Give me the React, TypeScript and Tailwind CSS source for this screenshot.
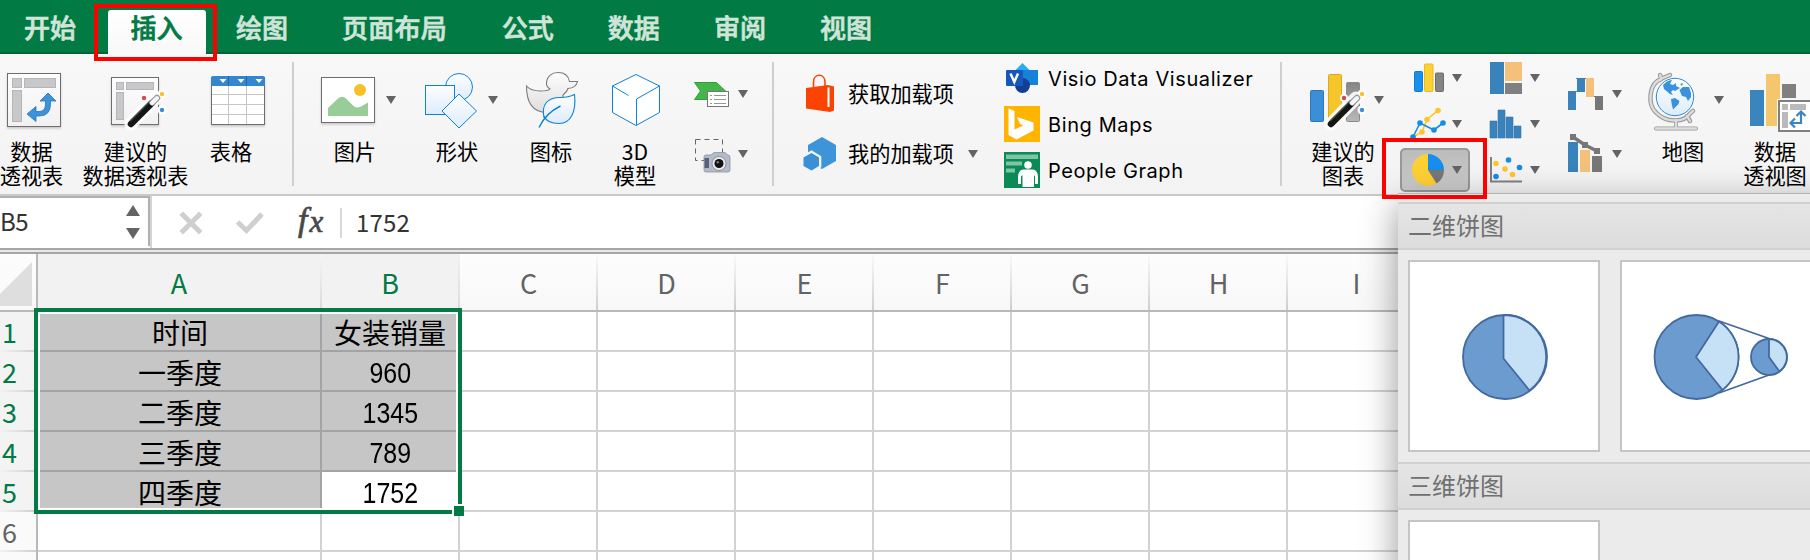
import type { ReactNode } from 'react';

const CJK = 'font-["Noto_Sans_CJK_SC",sans-serif]';

function Art({ x, y, w, h, children }: { x: number; y: number; w: number; h: number; children: ReactNode }) {
  return (
    <svg width={w} height={h} viewBox={`${x} ${y} ${w} ${h}`} className="block shrink-0 overflow-visible">
      {children}
    </svg>
  );
}

function Arrow({ x, y }: { x: number; y: number }) {
  return <path d={`M${x} ${y}h10l-5 8z`} fill="#646464" />;
}

function Wand() {
  return (
    <g>
      <path d="M131 124L156 98" stroke="#fff" strokeWidth="13" strokeLinecap="round" opacity=".9" />
      <circle cx="144" cy="98" r="4" fill="#fff" />
      <circle cx="162" cy="94" r="4.5" fill="#fff" />
      <circle cx="162" cy="110" r="4.5" fill="#fff" />
      <path d="M131 124L152 103" stroke="#151515" strokeWidth="6.5" strokeLinecap="round" />
      <path d="M130 121L150 101" stroke="#555" strokeWidth="1.2" />
      <path d="M152.5 102.5L157 98" stroke="#9a9a9a" strokeWidth="6.5" strokeLinecap="round" />
      <path d="M152 103L157 98" stroke="#f4f6f8" strokeWidth="4" strokeLinecap="round" />
      <circle cx="144" cy="98" r="2.2" fill="#e0434d" />
      <circle cx="162" cy="94" r="2.2" fill="#f7c325" />
      <circle cx="162" cy="110" r="2.2" fill="#3a8edb" />
    </g>
  );
}

function BigItem({ x, w, className, label, children }: { x: number; w: number; className: string; label: string; children: ReactNode }) {
  return (
    <div className={`flex shrink-0 flex-col items-center pt-[6px] ${className}`}>
      <Art x={x} y={60} w={w} h={80}>{children}</Art>
      <div className="-mt-[1px] text-center text-[21.200px] leading-[24px] whitespace-pre text-black">{label}</div>
    </div>
  );
}

function Divider({ className }: { className: string }) {
  return <div className={`mt-2 h-[124px] w-[2px] shrink-0 bg-[#cfcfcf] ${className}`} />;
}

function Tab({ label, className }: { label: string; className: string }) {
  return <div className={`shrink-0 text-[26px] leading-[52px] font-medium whitespace-nowrap [-webkit-text-stroke:0.7px_currentColor] ${className}`}>{label}</div>;
}

function Tabs() {
  return (
    <div className="flex h-[54px] shrink-0 border-b-2 border-[#036537] bg-[#027a43] pl-6 text-[#d0e4d9]">
      <Tab label="开始" className="mt-[1px]" />
      <div className="mt-[10px] ml-8 h-[44px] w-[98px] shrink-0 rounded-t-[3px] bg-linear-to-b from-white to-[#f8f8f8]">
        <Tab label="插入" className="-mt-[9px] -ml-[1px] text-center text-[#027a43]" />
      </div>
      <Tab label="绘图" className="mt-[1px] ml-[30px]" />
      <Tab label="页面布局" className="mt-[1px] ml-[54px] tracking-[0.2px]" />
      <Tab label="公式" className="mt-[1px] ml-[55px]" />
      <Tab label="数据" className="mt-[1px] ml-[54px]" />
      <Tab label="审阅" className="mt-[1px] ml-[54px]" />
      <Tab label="视图" className="mt-[1px] ml-[54px]" />
    </div>
  );
}

function Defs() {
  return (
    <svg width="0" height="0" className="absolute">
      <defs>
        <linearGradient id="paper" x1="0" y1="0" x2="0" y2="1">
          <stop offset="0" stopColor="#fdfdfd" />
          <stop offset="1" stopColor="#f1f1f1" />
        </linearGradient>
        <linearGradient id="sky" x1="0" y1="0" x2="0" y2="1">
          <stop offset="0" stopColor="#fdfeff" />
          <stop offset="1" stopColor="#ddecfa" />
        </linearGradient>
        <linearGradient id="duck" x1="0" y1="0" x2="0" y2="1">
          <stop offset="0" stopColor="#fdfdfd" />
          <stop offset="1" stopColor="#dedede" />
        </linearGradient>
        <linearGradient id="silver" x1="0" y1="0" x2="0" y2="1">
          <stop offset="0" stopColor="#858585" />
          <stop offset="1" stopColor="#b8b8b8" />
        </linearGradient>
        <filter id="drop" x="-20%" y="-20%" width="140%" height="150%">
          <feDropShadow dx="0" dy="1.5" stdDeviation="1" floodOpacity=".2" />
        </filter>
      </defs>
    </svg>
  );
}

function Ribbon() {
  return (
    <div className="flex h-[142px] shrink-0 overflow-hidden border-b-2 border-[#c9c9c9] bg-linear-to-b from-[#f8f8f8] to-[#f3f3f3]">
      <BigItem x={0} w={63} className="w-[63px]" label={'数据\n透视表'}>
        <rect x="7.5" y="73.5" width="53" height="53" fill="url(#paper)" stroke="#6e6e6e" filter="url(#drop)" />
        <g fill="#c8c8ca" stroke="#b6b6b8">
          <rect x="12.500" y="78.500" width="9" height="9" />
          <rect x="24.500" y="78.500" width="31" height="9" />
          <rect x="12.500" y="90.500" width="9" height="31" />
        </g>
        <path d="M48 93L56 101H50.500V104Q50.500 116 39 116H36V121.500L27 114L36 106.500V111.500H39Q45.500 111.500 45.500 104V101H40Z" fill="#3d92d8" stroke="#2577bd" strokeWidth=".8" />
      </BigItem>
      <BigItem x={83} w={105} className="ml-5 w-[105px]" label={'建议的\n数据透视表'}>
        <rect x="111.500" y="77.500" width="47" height="47" fill="url(#paper)" stroke="#6e6e6e" filter="url(#drop)" />
        <g fill="#c8c8ca" stroke="#b6b6b8">
          <rect x="116.500" y="82.500" width="7" height="7" />
          <rect x="126.500" y="82.500" width="27" height="7" />
          <rect x="116.500" y="92.500" width="7" height="27" />
        </g>
        <Wand />
      </BigItem>
      <BigItem x={198} w={66} className="ml-[10px] w-[66px]" label={'表格'}>
        <rect x="211.500" y="77.500" width="53" height="47" fill="#fff" stroke="#6e6e6e" filter="url(#drop)" />
        <path d="M211 86V78Q211 76 213 76H263Q265 76 265 78V86Z" fill="#3586cf" />
        <path d="M228.500 76V86M246.500 76V86" stroke="#1f68ae" />
        <path d="M219.500 79h7l-3.500 4zM237.500 79h7l-3.500 4zM255.500 79h7l-3.500 4z" fill="#fff" />
        <path d="M228.500 86V124M246.500 86V124M212 94.500H264M212 104.500H264M212 114.500H264" stroke="#c6c6c6" />
      </BigItem>
      <Divider className="ml-7" />
      <BigItem x={315} w={80} className="ml-[21px] w-[80px]" label={'图片'}>
        <rect x="321.500" y="77.500" width="53" height="45" fill="#fff" stroke="#6e6e6e" filter="url(#drop)" />
        <circle cx="360" cy="90" r="6" fill="#f6c124" />
        <path d="M328 108L338 98.500Q342 95 346 98.500L353 105.500Q356.500 109 361 106.500L368 102.500V116H328Z" fill="#99cd97" />
        <Arrow x={386} y={96} />
      </BigItem>
      <BigItem x={417} w={80} className="ml-[22px] w-[80px]" label={'形状'}>
        <circle cx="459" cy="87" r="13.500" fill="url(#sky)" stroke="#0c82da" />
        <rect x="425.500" y="85.500" width="29" height="29" fill="url(#sky)" stroke="#0c82da" />
        <path d="M459 94L476.500 111L459 128L442 111Z" fill="url(#sky)" stroke="#0c82da" strokeLinejoin="round" />
        <Arrow x={488} y={96} />
      </BigItem>
      <BigItem x={521} w={60} className="ml-6 w-[60px]" label={'图标'}>
        <path d="M526.500 86Q531 91 540 91Q548.500 91 550 89Q546 86.500 546.500 83C547 76 552 72.500 558 72.500C564.500 72.500 568.500 76 569.500 81.500H577.500Q576 88 568 88.500Q567 92 563 95V105Q560 112.500 547 112.500C534 112.500 526.500 104 526.500 86Z" fill="url(#duck)" stroke="#7b7b7b" strokeWidth="1.100" />
        <path d="M544 118C541 104 548 97.500 560 97.500Q569 97.500 574.500 94.500C576.500 111 571 123.500 559 123.500C551 123.500 546 121 544 116Z" fill="url(#sky)" stroke="#0c82da" strokeWidth="1.100" />
        <path d="M539 127.500C543 119 550 111 560.500 106" fill="none" stroke="#0c82da" strokeWidth="1.400" />
      </BigItem>
      <BigItem x={605} w={60} className="ml-6 w-[60px]" label={'3D\n模型'}>
        <path d="M636 74.500L659.500 86V112.500L636 125.500L612.500 112.500V86Z" fill="#fff" stroke="#0c82da" strokeLinejoin="round" />
        <path d="M612.500 86L628.500 95.500M659.500 86L636.500 99V125" fill="none" stroke="#0c82da" />
      </BigItem>
      <div className="ml-[25px] flex w-[60px] shrink-0 flex-col gap-[14px] pt-[18px]">
        <Art x={690} y={72} w={60} h={46}>
          <path d="M694.500 82.500H716.500L726 91.500V99.500H694.500L700.500 91Z" fill="#43b649" stroke="#2fa137" />
          <rect x="707.500" y="91.500" width="21" height="15" fill="#fff" stroke="#767676" />
          <path d="M710 95.500h2M714 95.500h12M710 99.500h2M714 99.500h12M710 103.500h2M714 103.500h12" stroke="#969696" />
          <Arrow x={738} y={90} />
        </Art>
        <Art x={690} y={132} w={60} h={46}>
          <path d="M695.500 139.500H722.500V153M695.500 139.500V160.500H704" fill="none" stroke="#666" strokeDasharray="5 4" />
          <path d="M704 157Q704 155 706 155H711L714 152.500H725L728 155Q730 155 730 157V170Q730 172 728 172H706Q704 172 704 170Z" fill="#b4bac8" stroke="#8b93a3" strokeWidth=".8" />
          <path d="M704.500 158h4.500v10h-4.500z" fill="#56627a" />
          <circle cx="719" cy="163.500" r="7" fill="#e8eaee" stroke="#777" strokeWidth=".7" />
          <circle cx="719" cy="163.500" r="4.500" fill="#111" />
          <circle cx="717.800" cy="162.300" r="1.300" fill="#778" />
          <Arrow x={738} y={150} />
        </Art>
      </div>
      <Divider className="ml-[22px]" />

      <div className="ml-[26px] flex w-[180px] shrink-0 flex-col gap-5 pt-5 text-[21.200px] text-black">
        <div className="flex h-10 items-center">
          <Art x={800} y={74} w={48} h={40}>
            <path d="M813.500 87V82C813.500 73 825 73 825 82V86" fill="none" stroke="#fb4304" strokeWidth="1.600" />
            <path d="M806 88L828 85L834 86.500V110.500L830 112L806 108.500Z" fill="#fb4304" />
            <path d="M828.500 87.500V107" stroke="#fff" strokeWidth="2" />
          </Art>
          <span className="-mt-[3px] leading-[40px] whitespace-nowrap">获取加载项</span>
        </div>
        <div className="flex h-10 items-center">
          <Art x={800} y={134} w={48} h={40}>
            <path d="M822 137L836 145V161L822 169L808 161V145Z" fill="#3e94d9" />
            <path d="M811.500 152L819.800 157V166.500L811.500 171.500L803 166.500V157Z" fill="#3586c8" stroke="#f3f3f3" strokeWidth="3" />
            <path d="M811.500 153L819 157.500V166L811.500 170.500L803.500 166V157.500Z" fill="#3a8fd6" />
          </Art>
          <span className="-mt-[3px] leading-[40px] whitespace-nowrap">我的加载项</span>
          <Art x={954} y={134} w={26} h={40}><Arrow x={968} y={150} /></Art>
        </div>
      </div>
      <div className='ml-6 flex w-[252px] shrink-0 flex-col gap-[10px] pt-[6px] font-["Inter",sans-serif] text-[20px] text-black'>
        <div className="flex h-9 items-center gap-2">
          <Art x={1004} y={60} w={36} h={36}>
            <path d="M1022.500 63L1032 72.500L1022.500 80L1013 72.500Z" fill="#28aef0" />
            <rect x="1022" y="70" width="16" height="15" fill="#1681d9" />
            <circle cx="1022.500" cy="85.500" r="7.500" fill="#123f94" />
            <rect x="1006" y="70" width="17" height="16" rx="1" fill="#1657bd" />
            <path d="M1010.500 73.500L1014.300 82L1018 73.500" fill="none" stroke="#fff" strokeWidth="2.400" />
          </Art>
          <span className="mt-[2px] whitespace-nowrap tracking-[0.600px]">Visio Data Visualizer</span>
        </div>
        <div className="flex h-9 items-center gap-2">
          <Art x={1004} y={106} w={36} h={36}>
            <rect x="1004" y="106" width="36" height="36" fill="#ffb400" />
            <path d="M1008.500 108.500L1014.500 111V129.500L1023.500 125.500L1020 124L1017 117L1033.500 122.500V130.500L1016.500 139.500L1008.500 135Z" fill="#fff" />
          </Art>
          <span className="mt-[2px] whitespace-nowrap tracking-[0.600px]">Bing Maps</span>
        </div>
        <div className="flex h-9 items-center gap-2">
          <Art x={1004} y={152} w={36} h={36}>
            <rect x="1004" y="152" width="36" height="36" fill="#0a8a56" />
            <path d="M1006 154.500h32v4.500h-32zM1006 161.500h16v4h-16zM1006 168.500h9v4h-9z" fill="#7fc4a5" />
            <circle cx="1028" cy="165" r="3.800" fill="#fff" />
            <path d="M1023 169.500H1033Q1038 170.500 1038 177V184H1035V176.500L1034 175V187H1022.500V175L1021 176.500V184H1018V177Q1018 170.500 1023 169.500Z" fill="#fff" />
          </Art>
          <span className="mt-[2px] whitespace-nowrap tracking-[0.600px]">People Graph</span>
        </div>
      </div>
      <Divider className="ml-6" />

      <BigItem x={1302} w={82} className="ml-5 w-[82px]" label={'建议的\n图表'}>
        <rect x="1310.500" y="90.500" width="13" height="31" rx="1" fill="#3c8fd6" stroke="#2b78bd" />
        <rect x="1328.500" y="74.500" width="13" height="47" rx="1" fill="#f6c52c" stroke="#ddaa18" />
        <rect x="1346.500" y="82.500" width="13" height="39" rx="1" fill="url(#silver)" stroke="#8a8a8a" />
        <g transform="translate(1200 0)"><Wand /></g>
        <Arrow x={1374} y={96} />
      </BigItem>
      <div className="ml-4 flex w-[70px] shrink-0 flex-col pt-[6px]">
        <Art x={1400} y={60} w={70} h={44}>
          <rect x="1414.500" y="71.500" width="8" height="20" rx="1" fill="#1a8eec" stroke="#0f7dd6" />
          <rect x="1424.500" y="64" width="8.500" height="27.500" rx="1" fill="#fdd034" stroke="#ecbb1c" />
          <rect x="1435.500" y="73" width="8" height="18.500" rx="1" fill="#848484" stroke="#6d6d6d" />
          <Arrow x={1452} y={74} />
        </Art>
        <Art x={1400} y={104} w={70} h={44}>
          <path d="M1413 137L1422 132L1427 119.500L1438 110.500" fill="none" stroke="#fbc62c" strokeWidth="1.600" />
          <path d="M1413 137L1420 123L1434 130L1443 123" fill="none" stroke="#168be8" strokeWidth="1.600" />
          <circle cx="1422" cy="132" r="2.800" fill="#fbc62c" /><circle cx="1427" cy="119.500" r="2.800" fill="#fbc62c" /><circle cx="1438" cy="110.500" r="2.800" fill="#fbc62c" />
          <circle cx="1413" cy="137" r="2.800" fill="#168be8" /><circle cx="1420" cy="123" r="2.800" fill="#168be8" /><circle cx="1434" cy="130" r="2.800" fill="#168be8" /><circle cx="1443" cy="123" r="2.800" fill="#168be8" />
          <Arrow x={1452} y={120} />
        </Art>
        <div className="h-[44px] w-[70px] rounded-[5px] border-2 border-[#989898] bg-linear-to-b from-[#bcbcbc] to-[#cbcbcb]">
          <Art x={1402} y={150} w={66} h={40}>
            <circle cx="1428" cy="170" r="16" fill="#fdd034" />
            <path d="M1428 170V154A16 16 0 0 1 1444 170Z" fill="#168eed" />
            <path d="M1428 170H1444A16 16 0 0 1 1436.500 183.600Z" fill="#777" />
            <Arrow x={1452} y={166} />
          </Art>
        </div>
      </div>
      <div className="ml-[18px] flex w-[54px] shrink-0 flex-col pt-[6px]">
        <Art x={1488} y={60} w={54} h={44}>
          <path d="M1490 62h14v32h-14z" fill="#3a82bb" />
          <path d="M1505 62h17v19h-17z" fill="#f5c079" />
          <path d="M1505 83h17v11h-17z" fill="#808080" />
          <Arrow x={1530} y={74} />
        </Art>
        <Art x={1488} y={104} w={54} h={46}>
          <path d="M1490 121h7v17h-7zM1498 110h7v28h-7zM1506 117h7v21h-7zM1514 126h7v12h-7z" fill="#3a82bb" stroke="#2f76ae" strokeWidth=".6" />
          <Arrow x={1530} y={120} />
        </Art>
        <Art x={1488} y={150} w={54} h={42}>
          <path d="M1491 157V181.500H1522" fill="none" stroke="#808080" strokeWidth="2" />
          <g fill="#fbc62c"><circle cx="1496" cy="163.500" r="2.800" /><circle cx="1505" cy="169" r="2.800" /><circle cx="1512.500" cy="174.500" r="2.800" /></g>
          <g fill="#168be8"><circle cx="1508.500" cy="160" r="2.800" /><circle cx="1519.500" cy="167.500" r="2.800" /><circle cx="1496" cy="176.500" r="2.800" /></g>
          <Arrow x={1530} y={166} />
        </Art>
      </div>
      <div className="ml-6 flex w-[58px] shrink-0 flex-col gap-[14px] pt-[18px]">
        <Art x={1566} y={72} w={58} h={46}>
          <path d="M1568 91.500H1578M1576 78.500H1590M1590 96.500H1600" stroke="#777" />
          <path d="M1568 91h8v19h-8zM1577 78h8v14h-8z" fill="#3a82bb" />
          <path d="M1586 78h8v19h-8z" fill="#f5c079" />
          <path d="M1595 96h8v14h-8z" fill="#777" />
          <Arrow x={1612} y={90} />
        </Art>
        <Art x={1566} y={132} w={58} h={46}>
          <path d="M1568 142h10v30h-10z" fill="#3a82bb" />
          <path d="M1580 150h10v22h-10z" fill="#f5c079" />
          <path d="M1592 156h10v16h-10z" fill="#777" />
          <path d="M1573 137L1585 145L1597 151" fill="none" stroke="#777" strokeWidth="3.500" />
          <path d="M1570 134h6v6h-6zM1582 142h6v6h-6zM1594 148h6v6h-6z" fill="#777" />
          <Arrow x={1612} y={150} />
        </Art>
      </div>
      <BigItem x={1643} w={80} className="ml-[19px] w-[80px]" label={'地图'}>
        <path d="M1660 75L1661.500 79C1649 83 1647 104 1656 112.500C1667 124 1685 122 1690 113.500L1693 111M1660.500 79L1670 75M1687 116L1690 121" fill="none" stroke="#9a9a9a" strokeWidth="4.500" strokeLinecap="round" strokeLinejoin="round" />
        <path d="M1676 120V128M1656 128.500H1696" stroke="#9a9a9a" strokeWidth="4" strokeLinecap="round" />
        <path d="M1660 75L1661.500 79C1649 83 1647 104 1656 112.500C1667 124 1685 122 1690 113.500L1693 111M1660.500 79L1670 75M1687 116L1690 121M1676 120V128M1656 128.500H1696" fill="none" stroke="#dcdcdc" strokeWidth="2.400" strokeLinecap="round" strokeLinejoin="round" />
        <circle cx="1675" cy="97" r="18.700" fill="url(#sky)" stroke="#2f89d4" />
        <path d="M1663 85Q1667 80.500 1672 80L1670 84L1673 85L1676 83L1676 86L1680 88L1675 91L1673 90L1671 92L1673 95L1670 94L1664 89ZM1671 99L1675 98L1679.500 101L1678.500 104L1673 109.500L1671.500 103ZM1680 84L1683 83L1682 86ZM1679.500 90L1683 87L1689 87L1691 93V97L1688 101L1686 97L1682 96Z" fill="#3a92dc" />
        <Arrow x={1714} y={96} />
      </BigItem>
      <BigItem x={1743} w={64} className="ml-5 w-[64px]" label={'数据\n透视图'}>
        <path d="M1750 90h14v36h-14z" fill="#3a85be" />
        <path d="M1766 74h14v52h-14z" fill="#f4c76c" />
        <path d="M1782 84h14v14h-14z" fill="#808080" />
        <rect x="1777" y="99" width="36" height="34" fill="#f6f6f6" />
        <rect x="1779" y="101" width="32" height="30" fill="#fff" stroke="#808080" strokeWidth="2" />
        <path d="M1782 104h6v6h-6zM1790 104h16v6h-16zM1782 112h6v16h-6z" fill="#bababa" />
        <path d="M1791 123H1801V113M1795 118.500L1790.500 123L1795 127.500M1796.500 116L1801 111.500L1805.500 116" fill="none" stroke="#3a85be" strokeWidth="2.200" />
      </BigItem>
    </div>
  );
}

function FormulaBar() {
  return (
    <div className="flex h-[52px] shrink-0 bg-white text-[24px] text-[#333]">
      <div className="flex h-[50px] w-[150px] shrink-0 items-center justify-between border-t-2 border-r-2 border-[#b0b0b0] pr-2">
        <span className="leading-[44px] tracking-[-0.500px] -mt-[2px]">B5</span>
        <svg width="14" height="34" viewBox="0 0 14 34"><path d="M0 11L7 0L14 11ZM0 23H14L7 34Z" fill="#646464" /></svg>
      </div>
      <div className="w-[2px] shrink-0 bg-[#d4d4d4]" />
      <svg width="200" height="52" viewBox="152 196 200 52" className="shrink-0">
        <path d="M183 215L199 231M199 215L183 231" stroke="#cfcfcf" strokeWidth="5" strokeLinecap="square" />
        <path d="M237.500 222L246.500 230.500L262 214" fill="none" stroke="#cfcfcf" strokeWidth="5" />
        <path d="M341 208V238" stroke="#d8d8d8" strokeWidth="2" />
        <text x="298" y="231" fontFamily="Liberation Serif, serif" fontStyle="italic" fontSize="34" fill="#484848" stroke="#484848" strokeWidth=".7">f</text>
        <text x="309.500" y="232" fontFamily="Liberation Serif, serif" fontStyle="italic" fontSize="31" fill="#484848" stroke="#484848" strokeWidth=".7">x</text>
      </svg>
      <span className="pl-1 leading-[52px] tracking-[0.200px]">1752</span>
    </div>
  );
}

const COLUMNS = ['C', 'D', 'E', 'F', 'G', 'H', 'I', 'J', 'K', 'L'];
const DATA: [string, string][] = [['时间', '女装销量'], ['一季度', '960'], ['二季度', '1345'], ['三季度', '789'], ['四季度', '1752']];
const ROWS = ['1', '2', '3', '4', '5', '6', ''];

function Sheet() {
  return (
    <div className="relative flex-1 overflow-hidden bg-white">
      <div className="flex h-[58px] border-b-2 border-[#b9b9b9] bg-linear-to-b from-[#fdfdfd] to-[#f8f8f8] text-[27px] leading-[58px] text-[#636363]">
        <div className="flex w-[38px] shrink-0 items-start border-r-2 border-[#b9b9b9] pt-2">
          <svg width="32" height="44" viewBox="0 0 32 44"><path d="M32 0V44H0V32Z" fill="#dedede" /></svg>
        </div>
        <div className="flex w-[284px] shrink-0 bg-[#f2f2f2] text-[#027a43]">
          <span className="flex-1 text-center">A</span>
          <span className="w-[2px] bg-linear-to-b from-[#f6f6f6] to-[#dadada]" />
        </div>
        <div className="flex w-[138px] shrink-0 bg-[#f2f2f2] text-[#027a43]">
          <span className="flex-1 text-center">B</span>
          <span className="w-[2px] bg-linear-to-b from-[#f2f2f2] to-[#dadada]" />
        </div>
        {COLUMNS.map((c) => (
          <div key={c} className="flex w-[138px] shrink-0">
            <span className="flex-1 pl-[1px] text-center">{c}</span>
            <span className="w-[2px] bg-linear-to-b from-[#fafafa] to-[#cfcfcf]" />
          </div>
        ))}
      </div>
      {ROWS.map((n, i) => {
        const d = DATA[i];
        return (
          <div key={i} className="flex h-10">
            <div className={`flex w-[38px] shrink-0 flex-col border-r-2 border-[#b9b9b9] pl-[2px] text-[27px] ${d ? 'bg-[#f3f3f3] text-[#027a43]' : 'bg-[#fafafa] text-[#636363]'}`}>
              <span className="h-[38px] leading-[40px]">{n}</span>
              <span className="-ml-[2px] h-[2px] bg-linear-to-r from-[#f3f3f3] to-[#cfcfcf]" />
            </div>
            <div className={`w-[284px] shrink-0 border-r-2 border-b-2 pl-[2px] text-center text-[28px] leading-[41px] text-black ${d ? 'border-[#a3a3a3] bg-[#c6c6c6]' : 'border-[#d2d2d2]'}`}>{d?.[0]}</div>
            <div className={`w-[138px] shrink-0 border-r-2 border-b-2 text-center text-black ${i === 0 ? 'text-[28px] leading-[41px]' : 'font-["Liberation_Sans",sans-serif] text-[29px] leading-[42px]'} ${d ? (i === 4 ? 'border-[#d2d2d2]' : 'border-[#a3a3a3] bg-[#c6c6c6]') : 'border-[#d2d2d2]'}`}>
              <span className={i === 0 ? '' : 'inline-block scale-x-[0.86]'}>{d?.[1]}</span>
            </div>
            {COLUMNS.map((c) => <div key={c} className="w-[138px] shrink-0 border-r-2 border-b-2 border-[#d2d2d2]" />)}
          </div>
        );
      })}
      <div className="absolute top-[54px] left-[34px] h-[206px] w-[428px] border-4 border-[#027a43]">
        <div className="h-full w-full border-2 border-white" />
      </div>
      <div className="absolute top-[250px] left-[452px] h-3 w-3 border-t-2 border-l-2 border-white bg-[#027a43]" />
    </div>
  );
}

function Heading({ label }: { label: string }) {
  return <div className="h-12 shrink-0 border-y-2 border-[#d0d0d0] bg-linear-to-b from-[#e5e5e5] to-[#dcdcdc] pl-[10px] text-[24px] leading-[42px] text-[#707070]">{label}</div>;
}

function PieMenu() {
  return (
    <div className="absolute top-[193px] left-[1398px] flex h-[460px] w-[500px] flex-col border-t border-[#b3b3b3] bg-[#ebebeb] pt-2 shadow-[0_12px_34px_rgba(0,0,0,0.42)]">
      <Heading label="二维饼图" />
      <div className="flex shrink-0 gap-5 py-[10px] pl-[10px]">
        <div className="h-[192px] w-[192px] shrink-0 border-2 border-[#c5c5c5] bg-white">
          <Art x={1410} y={262} w={188} h={188}>
            <g stroke="#426a9f" strokeWidth="1.800" strokeLinejoin="round">
              <circle cx="1505" cy="357" r="42" fill="#6c9bd0" />
              <path d="M1503.500 358.500V315A42 42 0 0 1 1529.500 390.500Z" fill="#c6e1f6" />
            </g>
          </Art>
        </div>
        <div className="h-[192px] w-[192px] shrink-0 border-2 border-[#c5c5c5] bg-white">
          <Art x={1622} y={262} w={188} h={188}>
            <g stroke="#426a9f" strokeWidth="1.800" strokeLinejoin="round">
              <path d="M1719 321L1769 338.500M1719 393L1769 375" fill="none" />
              <circle cx="1696.500" cy="357" r="42" fill="#6c9bd0" />
              <path d="M1696 357L1719 321.500A42 42 0 0 1 1722.500 390Z" fill="#c6e1f6" />
              <circle cx="1769" cy="357" r="18" fill="#6c9bd0" />
              <path d="M1769 357V339A18 18 0 0 1 1779.500 371.500Z" fill="#c6e1f6" />
            </g>
          </Art>
        </div>
      </div>
      <Heading label="三维饼图" />
      <div className="pt-[10px] pl-[10px]">
        <div className="h-[100px] w-[192px] border-2 border-[#c5c5c5] bg-white" />
      </div>
    </div>
  );
}

export default function App() {
  return (
    <div className={`relative flex h-[560px] w-[1810px] flex-col overflow-hidden bg-white ${CJK}`}>
      <Defs />
      <Tabs />
      <Ribbon />
      <FormulaBar />
      <div className="h-[6px] shrink-0 border-t-2 border-b-2 border-[#a6a6a6] bg-[#e8e8e8]" />
      <Sheet />
      <PieMenu />
      <div className="absolute top-[4px] left-[94px] h-[57px] w-[123px] border-4 border-[#fe0000]" />
      <div className="absolute top-[138px] left-[1382px] h-[61px] w-[105px] border-4 border-[#fe0000]" />
    </div>
  );
}
